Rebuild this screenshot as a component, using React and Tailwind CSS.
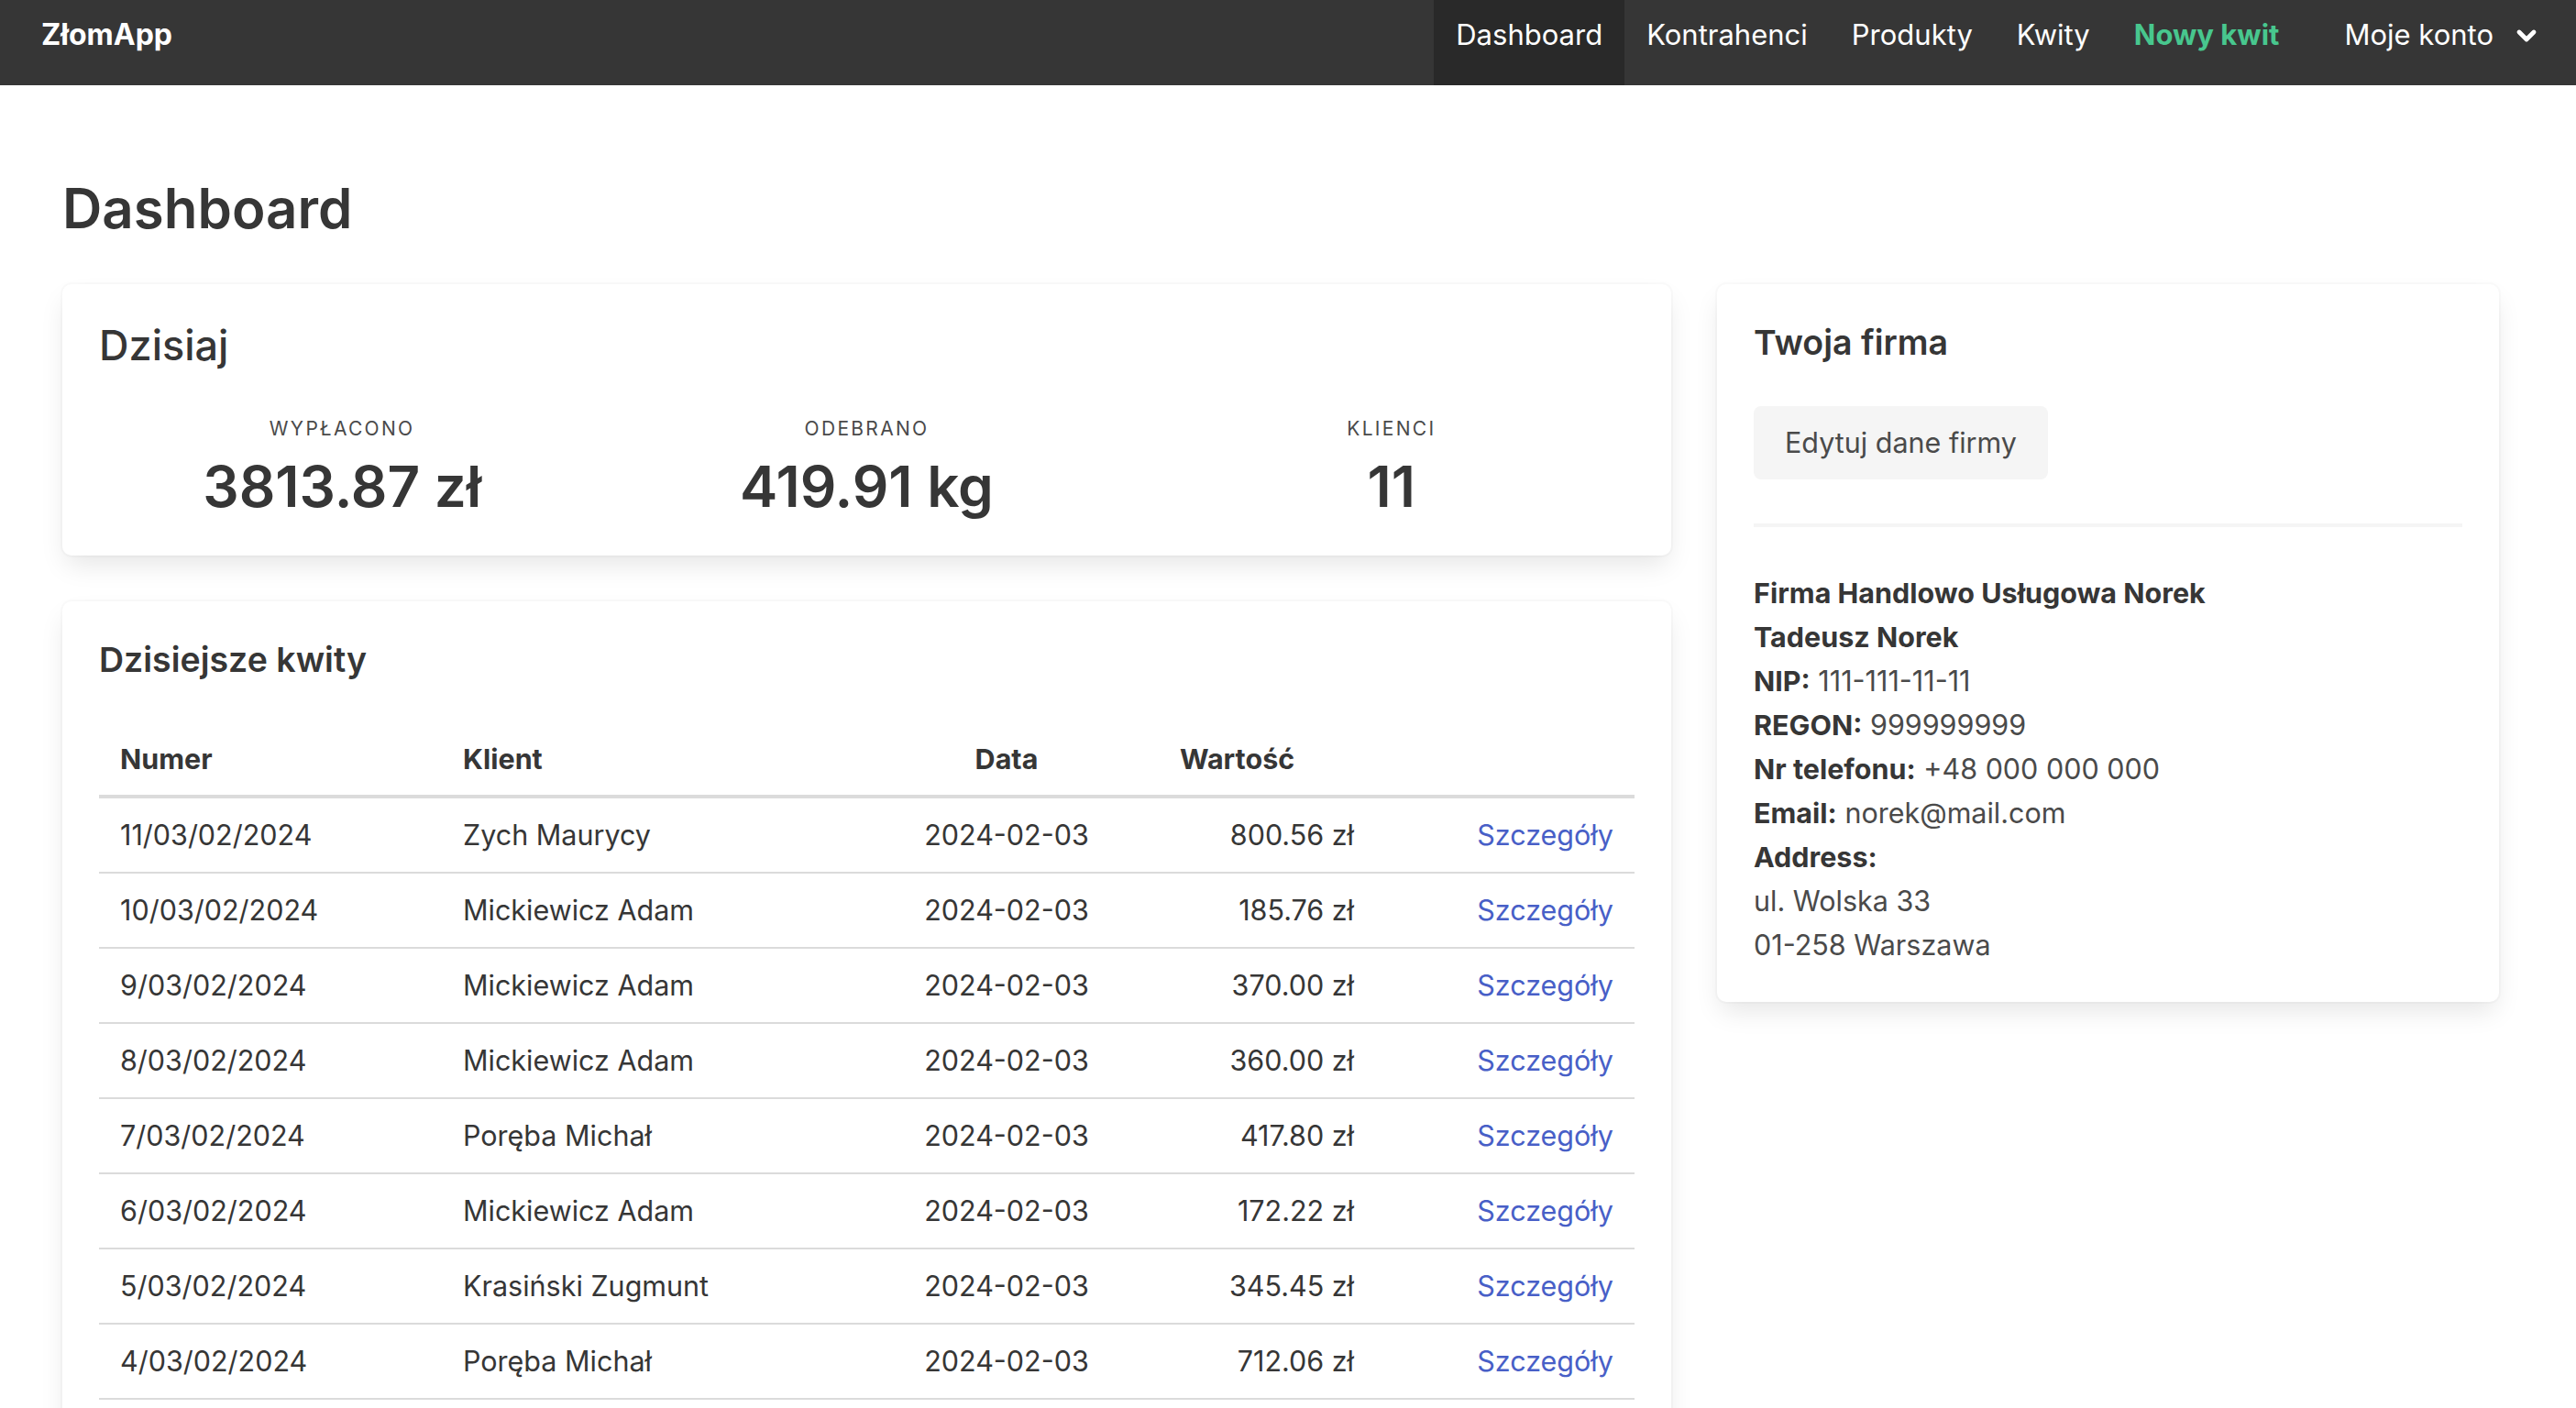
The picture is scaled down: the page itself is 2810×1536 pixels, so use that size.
import React from 'react';
import { ChevronDown } from 'lucide-react';

const NAV = ['Kontrahenci', 'Produkty', 'Kwity'];

const STATS = [
  { label: 'Wypłacono', value: '3813.87 zł' },
  { label: 'Odebrano', value: '419.91 kg' },
  { label: 'Klienci', value: '11' },
];

const KWITY = [
  { nr: '11/03/02/2024', klient: 'Zych Maurycy', data: '2024-02-03', kwota: '800.56 zł' },
  { nr: '10/03/02/2024', klient: 'Mickiewicz Adam', data: '2024-02-03', kwota: '185.76 zł' },
  { nr: '9/03/02/2024', klient: 'Mickiewicz Adam', data: '2024-02-03', kwota: '370.00 zł' },
  { nr: '8/03/02/2024', klient: 'Mickiewicz Adam', data: '2024-02-03', kwota: '360.00 zł' },
  { nr: '7/03/02/2024', klient: 'Poręba Michał', data: '2024-02-03', kwota: '417.80 zł' },
  { nr: '6/03/02/2024', klient: 'Mickiewicz Adam', data: '2024-02-03', kwota: '172.22 zł' },
  { nr: '5/03/02/2024', klient: 'Krasiński Zugmunt', data: '2024-02-03', kwota: '345.45 zł' },
  { nr: '4/03/02/2024', klient: 'Poręba Michał', data: '2024-02-03', kwota: '712.06 zł' },
];

function Card({ children, className = '' }) {
  return (
    <div className={`bg-white rounded-[10px] shadow-[0_14px_29px_-4px_rgba(10,10,10,0.1),0_0_0_2px_rgba(10,10,10,0.02)] ${className}`}>
      {children}
    </div>
  );
}

function Navbar() {
  return (
    <nav className="flex items-stretch h-[93px] bg-[#363636] text-white text-[31px] leading-[44px]">
      <div className="pl-[45px] pt-[16px] text-[32px] font-bold">ZłomApp</div>
      <div className="ml-auto flex items-stretch">
        <a className="pt-[16px] px-[24px] bg-[#292929]">Dashboard</a>
        {NAV.map(item => (
          <a key={item} className="pt-[16px] px-[24px]">{item}</a>
        ))}
        <a className="pt-[16px] px-[24px] font-bold text-[#48c78e]">Nowy kwit</a>
        <a className="flex items-start pt-[16px] ml-[23px] pl-[24px] pr-[38px] gap-[20px]">
          Moje konto
          <ChevronDown className="mt-[7px]" size={32} strokeWidth={3.6} />
        </a>
      </div>
    </nav>
  );
}

function Dzisiaj() {
  return (
    <Card className="px-[40px] pt-[40px] pb-[40px]">
      <h2 className="text-[45px] leading-[54px] font-medium text-[#363636]">Dzisiaj</h2>
      <div className="grid grid-cols-3 -mx-[21px] mt-[52px]">
        {STATS.map(s => (
          <div key={s.label} className="text-center">
            <p className="text-[21px] leading-[24px] uppercase tracking-[2.3px] text-[#4a4a4a]">{s.label}</p>
            <p className="mt-[16px] text-[62px] leading-[70px] font-semibold text-[#363636]">{s.value}</p>
          </div>
        ))}
      </div>
    </Card>
  );
}

function DzisiejszeKwity() {
  return (
    <Card className="px-[40px] pt-[40px] pb-[40px]">
      <h2 className="text-[37.5px] leading-[48px] font-semibold text-[#363636]">Dzisiejsze kwity</h2>
      <table className="w-full mt-[45px] text-[30.5px] text-[#363636] border-collapse table-fixed">
        <colgroup>
          <col className="w-[374px]" />
          <col className="w-[450px]" />
          <col className="w-[332px]" />
          <col className="w-[236px]" />
          <col />
        </colgroup>
        <thead>
          <tr className="border-b-[4px] border-[#dbdbdb]">
            <th className="text-left font-bold px-[23px] py-[17px] leading-[44px]">Numer</th>
            <th className="text-left font-bold px-[23px] py-[17px] leading-[44px]">Klient</th>
            <th className="text-center font-bold px-[23px] py-[17px] leading-[44px]">Data</th>
            <th className="text-left font-bold px-[23px] py-[17px] leading-[44px]">Wartość</th>
            <th className="px-[23px] py-[17px]"></th>
          </tr>
        </thead>
        <tbody>
          {KWITY.map(k => (
            <tr key={k.nr} className="border-b-[2px] border-[#dbdbdb]">
              <td className="px-[23px] py-[18px] leading-[44px]">{k.nr}</td>
              <td className="px-[23px] py-[18px] leading-[44px]">{k.klient}</td>
              <td className="px-[23px] py-[18px] leading-[44px] text-center">{k.data}</td>
              <td className="px-[23px] py-[18px] leading-[44px] text-right">{k.kwota}</td>
              <td className="px-[23px] py-[18px] leading-[44px] text-right">
                <a className="text-[#485fc7]">Szczegóły</a>
              </td>
            </tr>
          ))}
        </tbody>
      </table>
    </Card>
  );
}

function TwojaFirma() {
  return (
    <Card className="px-[40px] pt-[40px] pb-[38px]">
      <h2 className="text-[37.5px] leading-[48px] font-semibold text-[#363636]">Twoja firma</h2>
      <button className="mt-[45px] h-[80px] px-[34px] rounded-[8px] bg-[#f5f5f5] text-[30.5px] text-[#4a4a4a]">
        Edytuj dane firmy
      </button>
      <div className="mt-[48px] h-[4px] bg-[#f5f5f5]" />
      <div className="mt-[48px] text-[30.5px] leading-[48px] text-[#4a4a4a]">
        <p className="font-bold text-[#363636]">Firma Handlowo Usługowa Norek</p>
        <p className="font-bold text-[#363636]">Tadeusz Norek</p>
        <p><span className="font-bold text-[#363636]">NIP:</span> 111-111-11-11</p>
        <p><span className="font-bold text-[#363636]">REGON:</span> 999999999</p>
        <p><span className="font-bold text-[#363636]">Nr telefonu:</span> +48 000 000 000</p>
        <p><span className="font-bold text-[#363636]">Email:</span> norek@mail.com</p>
        <p className="font-bold text-[#363636]">Address:</p>
        <p>ul. Wolska 33</p>
        <p>01-258 Warszawa</p>
      </div>
    </Card>
  );
}

export default function App() {
  return (
    <div className="min-h-screen bg-white font-['Inter','Noto_Sans',sans-serif] text-[#4a4a4a]">
      <Navbar />
      <main className="pl-[68px] pr-[84px] pt-[99px] pb-[80px]">
        <h1 className="text-[60px] leading-[70px] font-semibold text-[#363636]">Dashboard</h1>
        <div className="flex items-start gap-[50px] mt-[48px]">
          <div className="w-[1755px] flex flex-col gap-[50px]">
            <Dzisiaj />
            <DzisiejszeKwity />
          </div>
          <div className="w-[853px]">
            <TwojaFirma />
          </div>
        </div>
      </main>
    </div>
  );
}
